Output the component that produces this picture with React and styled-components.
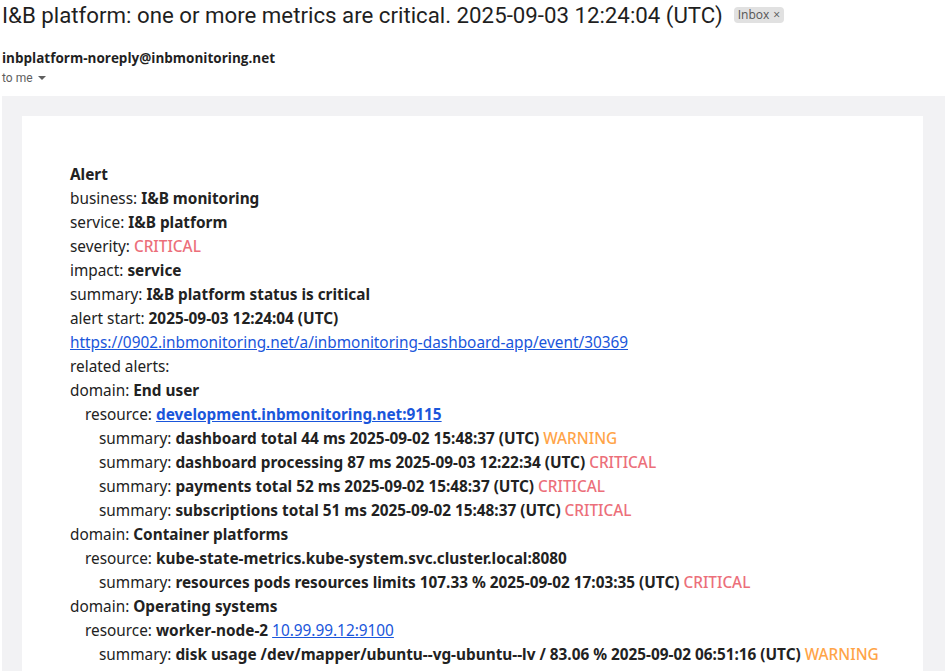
import React from "react";
import styled, { createGlobalStyle } from "styled-components";

const Global = createGlobalStyle`
  html, body { margin: 0; padding: 0; background: #fff; }
  body { font-family: "Noto Sans", "Open Sans", sans-serif; color: #222; }
`;

const Page = styled.div`
  padding: 0 0 0 2px;
  overflow: hidden;
  height: 671px;
`;

const Header = styled.div`
  display: flex;
  align-items: center;
  gap: 11px;
  height: 30px;
`;

const Subject = styled.h1`
  margin: 0;
  font-family: Roboto, "Open Sans", sans-serif;
  font-weight: 400;
  font-size: 22.25px;
  line-height: 30px;
  color: #1f1f1f;
  white-space: nowrap;
`;

const Badge = styled.span`
  display: inline-flex;
  align-items: center;
  gap: 4px;
  background: #e1e1e1;
  color: #555;
  border-radius: 4px;
  font-size: 12px;
  line-height: 16px;
  padding: 0 4px;
  font-family: "Open Sans", sans-serif;
`;

const Sender = styled.div`
  margin-top: 18px;
  font-family: "Open Sans", sans-serif;
  font-weight: 700;
  font-size: 13.5px;
  line-height: 20px;
  color: #1f1f1f;
`;

const Recipient = styled.div`
  margin-top: 2px;
  font-family: Roboto, "Open Sans", sans-serif;
  font-size: 12px;
  line-height: 16px;
  color: #5e5e5e;
  display: flex;
  align-items: center;
  gap: 5px;
`;

const Caret = styled.span`
  width: 0;
  height: 0;
  border-left: 4px solid transparent;
  border-right: 4px solid transparent;
  border-top: 4px solid #5e5e5e;
`;

const Frame = styled.div`
  margin-top: 10px;
  background: #f2f2f4;
  padding: 20px 22px 0 20px;
`;

const Card = styled.div`
  background: #fff;
  padding: 46px 48px 40px 48px;
  font-size: 15.35px;
  line-height: 24px;
  color: #222;
`;

const Line = styled.div`
  padding-left: ${(p) => p.$indent || 0}px;
  white-space: nowrap;
`;

const B = styled.b`
  font-weight: 700;
`;

const Sev = styled.span`
  font-weight: 500;
  color: ${(p) => (p.$level === "WARNING" ? "#ffa448" : "#ec6f7a")};
`;

const Link = styled.a`
  color: #1a56db;
  text-decoration: underline;
`;

const BoldLink = styled(Link)`
  font-weight: 700;
`;

const Field = ({ label, children, indent }) => (
  <Line $indent={indent}>
    {label}: {children}
  </Line>
);

const summaries = [
  {
    domain: "End user",
    resource: <BoldLink href="#">development.inbmonitoring.net:9115</BoldLink>,
    items: [
      ["dashboard total 44 ms 2025-09-02 15:48:37 (UTC)", "WARNING"],
      ["dashboard processing 87 ms 2025-09-03 12:22:34 (UTC)", "CRITICAL"],
      ["payments total 52 ms 2025-09-02 15:48:37 (UTC)", "CRITICAL"],
      ["subscriptions total 51 ms 2025-09-02 15:48:37 (UTC)", "CRITICAL"],
    ],
  },
  {
    domain: "Container platforms",
    resource: <B>kube-state-metrics.kube-system.svc.cluster.local:8080</B>,
    items: [
      ["resources pods resources limits 107.33 % 2025-09-02 17:03:35 (UTC)", "CRITICAL"],
    ],
  },
  {
    domain: "Operating systems",
    resource: (
      <>
        <B>worker-node-2</B> <Link href="#">10.99.99.12:9100</Link>
      </>
    ),
    items: [
      ["disk usage /dev/mapper/ubuntu--vg-ubuntu--lv / 83.06 % 2025-09-02 06:51:16 (UTC)", "WARNING"],
    ],
  },
];

export default function App() {
  return (
    <Page>
      <Global />
      <Header>
        <Subject>I&amp;B platform: one or more metrics are critical. 2025-09-03 12:24:04 (UTC)</Subject>
        <Badge>Inbox <span>×</span></Badge>
      </Header>
      <Sender>inbplatform-noreply@inbmonitoring.net</Sender>
      <Recipient>to me <Caret /></Recipient>
      <Frame>
        <Card>
          <Line><B>Alert</B></Line>
          <Field label="business"><B>I&amp;B monitoring</B></Field>
          <Field label="service"><B>I&amp;B platform</B></Field>
          <Field label="severity"><Sev $level="CRITICAL">CRITICAL</Sev></Field>
          <Field label="impact"><B>service</B></Field>
          <Field label="summary"><B>I&amp;B platform status is critical</B></Field>
          <Field label="alert start"><B>2025-09-03 12:24:04 (UTC)</B></Field>
          <Line>
            <Link href="#">https://0902.inbmonitoring.net/a/inbmonitoring-dashboard-app/event/30369</Link>
          </Line>
          <Line>related alerts:</Line>
          {summaries.map((d) => (
            <React.Fragment key={d.domain}>
              <Field label="domain"><B>{d.domain}</B></Field>
              <Field label="resource" indent={15}>{d.resource}</Field>
              {d.items.map(([text, level]) => (
                <Field key={text} label="summary" indent={29}>
                  <B>{text}</B> <Sev $level={level}>{level}</Sev>
                </Field>
              ))}
            </React.Fragment>
          ))}
        </Card>
      </Frame>
    </Page>
  );
}
